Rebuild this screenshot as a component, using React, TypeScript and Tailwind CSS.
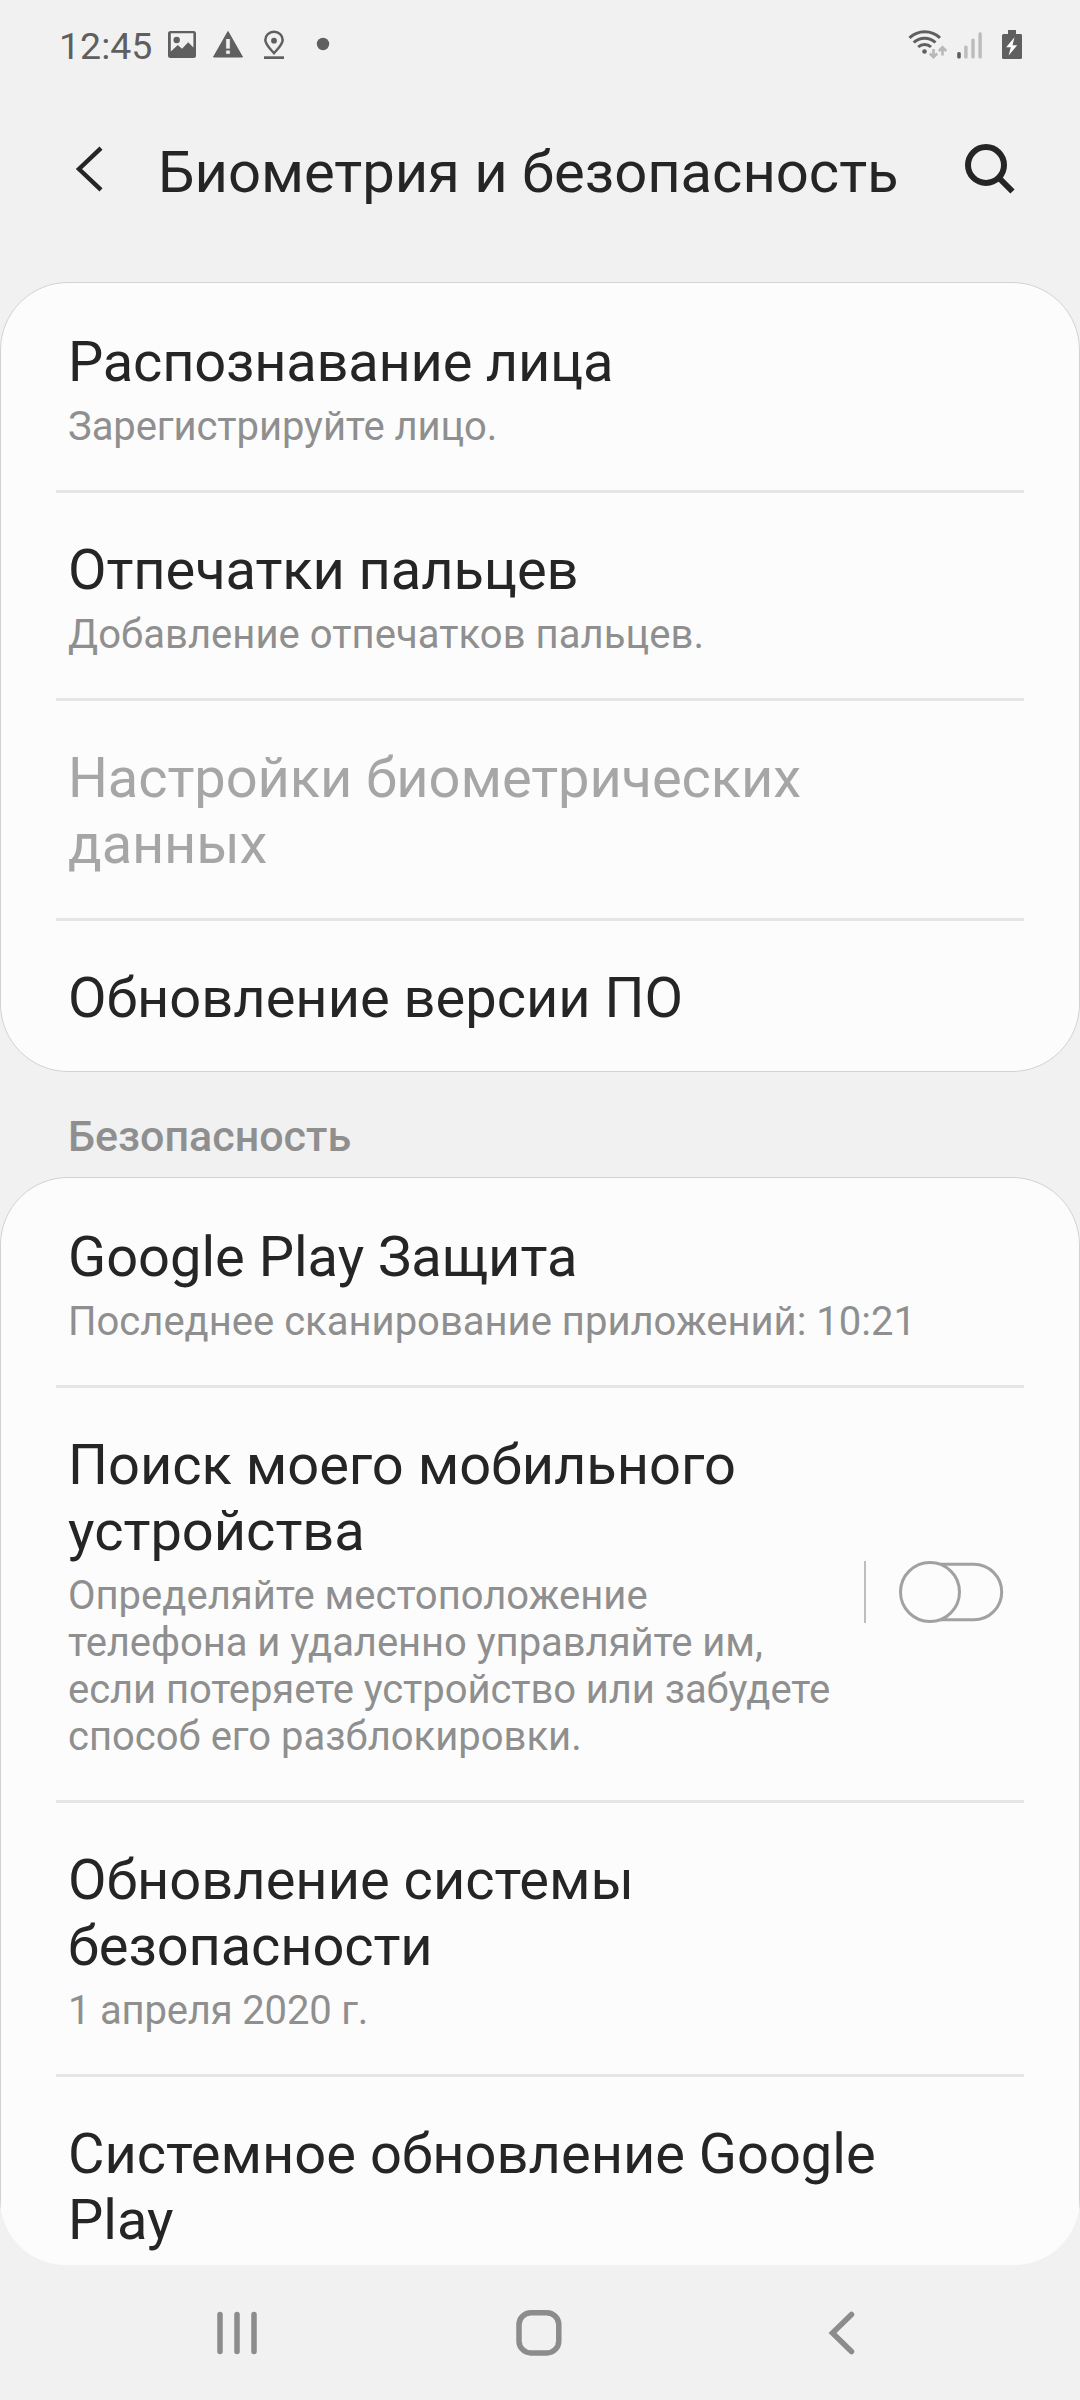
import React from "react";

type Line = { text: string; tracking?: string };

type RowProps = {
  title: Line[];
  summary?: Line[];
  disabled?: boolean;
  toggle?: boolean;
  last?: boolean;
};

function Lines({ lines }: { lines: Line[] }) {
  return (
    <>
      {lines.map(({ text, tracking = "tracking-normal" }) => (
        <span key={text} className={`block whitespace-nowrap ${tracking}`}>
          {text}
        </span>
      ))}
    </>
  );
}

function Toggle() {
  return (
    <div className="mb-[8px] flex items-center">
      <div className="h-[62px] w-[2px] bg-[#bdbdbd]" />
      <svg className="ml-[31px] h-[64px] w-[110px]" viewBox="0 0 110 64" fill="none" stroke="#a1a1a1" strokeWidth="3">
        <rect x="6" y="4.2" width="98.7" height="55.6" rx="27.8" />
        <circle cx="33" cy="32" r="29.5" fill="#fcfcfc" />
      </svg>
    </div>
  );
}

function Row({ title, summary, disabled, toggle, last }: RowProps) {
  return (
    <div className="flex flex-col">
      <div className="flex items-center justify-between pt-[44px] pb-[40px] pl-[67px] pr-[72px]">
        <div>
          <div className={disabled ? "text-[56px] leading-[66px] text-[#a6a6a6]" : "text-[56px] leading-[66px] text-[#252525]"}>
            <Lines lines={title} />
          </div>
          {summary && (
            <div className="mt-[8px] text-[40px] leading-[47px] text-[#8f8f8f]">
              <Lines lines={summary} />
            </div>
          )}
        </div>
        {toggle && <Toggle />}
      </div>
      {!last && <div className={disabled ? "mt-px ml-[55px] mr-[55px] h-[3px] bg-[#e5e5e5]" : "ml-[55px] mr-[55px] h-[3px] bg-[#e5e5e5]"} />}
    </div>
  );
}

function StatusBar() {
  return (
    <div className="flex h-[88px] shrink-0 items-center justify-between pl-[59px] text-[#5f5f5f]">
      <div className="flex items-center">
        <span className="w-[104px] pt-[4px] text-[37.5px] leading-[44px]">12:45</span>
        <svg className="h-[44px] w-[180px]" viewBox="163 22 180 44" fill="currentColor">
          <path
            fillRule="evenodd"
            d="M170.500 31h23a2.500 2.500 0 0 1 2.500 2.500v22a2.500 2.500 0 0 1-2.500 2.500h-23a2.500 2.500 0 0 1-2.500-2.500v-22a2.500 2.500 0 0 1 2.500-2.500ZM170.800 33.200v18.300l7-6.500 4.200 3.800 6.200-6.500 5.200 5.200V33.200Z"
          />
          <circle cx="176.700" cy="40" r="3.200" />
          <path fillRule="evenodd" stroke="currentColor" strokeWidth="1" strokeLinejoin="round" d="M228 31.500 242.500 57H213.500ZM225.700 38.500v10.600h4.600V38.500ZM225.700 50v4.300h4.600v-4.300Z" />
          <path
            d="M274 53.200c-3.300-3.800-8.700-8.600-8.700-13.200a8.700 8.200 0 0 1 17.400 0c0 4.600-5.400 9.400-8.700 13.200Z"
            fill="none"
            stroke="currentColor"
            strokeWidth="2.500"
          />
          <circle cx="274" cy="40.700" r="2.900" />
          <rect x="264" y="56.300" width="20" height="2.700" />
          <circle cx="323" cy="44" r="6.200" />
        </svg>
      </div>
      <svg className="h-[44px] w-[180px]" viewBox="900 22 180 44" fill="none">
        <g stroke="#5f5f5f" strokeWidth="3">
          <path d="M909.500 37.800c8.500-8.200 22-8.200 30.500 0" />
          <path d="M913.700 42.500c6-5.800 15.800-5.800 21.800 0" />
          <path d="M918.200 47c3.600-3.500 9.200-3.500 12.800 0" />
        </g>
        <circle cx="924.500" cy="51.500" r="2.300" fill="#5f5f5f" />
        <g stroke="#b8b8b8" strokeWidth="2.600">
          <path d="M933.500 49v8M929.800 53.500l3.700 3.700 3.700-3.700" />
          <path d="M942.500 55.500v-8M938.800 51l3.700-3.700 3.700 3.700" />
        </g>
        <rect x="957.200" y="52" width="3.600" height="6.500" rx="1.500" fill="#5f5f5f" />
        <g fill="#bcbcbc">
          <rect x="964.200" y="45.500" width="3.400" height="13" rx="1.500" />
          <rect x="971.300" y="38.500" width="3.400" height="20" rx="1.500" />
          <rect x="978.400" y="32.300" width="3.400" height="26.200" rx="1.500" />
        </g>
        <path d="M1008 30h8v4h4.500a1.500 1.500 0 0 1 1.500 1.500V57.500a1.500 1.500 0 0 1-1.500 1.500h-17a1.500 1.500 0 0 1-1.500-1.500V35.500a1.500 1.500 0 0 1 1.500-1.500h4.500Z" fill="#5f5f5f" />
        <path d="m1014.500 37.200-8.300 10h4.600l-2.200 8.300 8.600-10.300h-4.700Z" fill="#fff" />
      </svg>
    </div>
  );
}

function Header() {
  return (
    <div className="flex h-[194px] shrink-0 items-start justify-between pt-[50px]">
      <div className="flex">
        <svg className="h-[64px] w-[158px]" viewBox="0 138 158 64" fill="none" stroke="#252525" strokeWidth="4.400">
          <path d="M101 148.200 79 169l22 20.800" />
        </svg>
        <h1 className="whitespace-nowrap text-[58px] leading-[68px] tracking-[-0.05px] text-[#252525]">Биометрия и безопасность</h1>
      </div>
      <svg className="h-[64px] w-[120px]" viewBox="960 138 120 64" fill="none" stroke="#252525" strokeWidth="6">
        <circle cx="986" cy="165" r="18" />
        <path d="m998.500 177.500 14 14" />
      </svg>
    </div>
  );
}

function NavBar() {
  return (
    <div className="h-[135px] shrink-0 bg-[#f1f1f1]">
      <svg className="h-full w-full" viewBox="0 2265 1080 135" fill="none" stroke="#8c8c8c" strokeWidth="5.500" strokeLinecap="round">
        <path d="M220 2314.500v37M237 2314.500v37M254 2314.500v37" />
        <rect x="519" y="2312.700" width="39.800" height="40.200" rx="12" />
        <path d="M851.500 2314.500 832.500 2333l19 18.500" />
      </svg>
    </div>
  );
}

export default function App() {
  return (
    <div className="flex h-[2400px] w-[1080px] flex-col overflow-hidden bg-[#f1f1f1] font-['Roboto',sans-serif]">
      <StatusBar />
      <Header />
      <main className="flex h-[1983px] shrink-0 flex-col overflow-hidden rounded-b-[66px]">
        <section className="shrink-0 rounded-[68px] border border-[#d2d2d2] bg-[#fcfcfc] pt-[2px]">
          <Row
            title={[{ text: "Распознавание лица", tracking: "tracking-[-0.22px]" }]}
            summary={[{ text: "Зарегистрируйте лицо.", tracking: "tracking-[-0.09px]" }]}
          />
          <Row
            title={[{ text: "Отпечатки пальцев", tracking: "tracking-[-0.08px]" }]}
            summary={[{ text: "Добавление отпечатков пальцев.", tracking: "tracking-[0.05px]" }]}
          />
          <Row
            title={[
              { text: "Настройки биометрических", tracking: "tracking-[-0.09px]" },
              { text: "данных", tracking: "tracking-[-0.15px]" },
            ]}
            disabled
          />
          <Row title={[{ text: "Обновление версии ПО" }]} last />
        </section>
        <h2 className="h-[105px] shrink-0 pl-[68px] pt-[39px] text-[43px] font-medium leading-[50px] text-[#8f8f8f]">Безопасность</h2>
        <section className="shrink-0 rounded-t-[68px] border border-[#d2d2d2] bg-[#fcfcfc] pt-[2px]">
          <Row title={[{ text: "Google Play Защита" }]} summary={[{ text: "Последнее сканирование приложений: 10:21" }]} />
          <Row
            title={[{ text: "Поиск моего мобильного" }, { text: "устройства" }]}
            summary={[
              { text: "Определяйте местоположение" },
              { text: "телефона и удаленно управляйте им,", tracking: "tracking-[-0.05px]" },
              { text: "если потеряете устройство или забудете", tracking: "tracking-[-0.08px]" },
              { text: "способ его разблокировки." },
            ]}
            toggle
          />
          <Row
            title={[{ text: "Обновление системы" }, { text: "безопасности", tracking: "tracking-[-0.12px]" }]}
            summary={[{ text: "1 апреля 2020 г.", tracking: "tracking-[-0.18px]" }]}
          />
          <Row title={[{ text: "Системное обновление Google" }, { text: "Play" }]} last />
        </section>
      </main>
      <NavBar />
    </div>
  );
}
